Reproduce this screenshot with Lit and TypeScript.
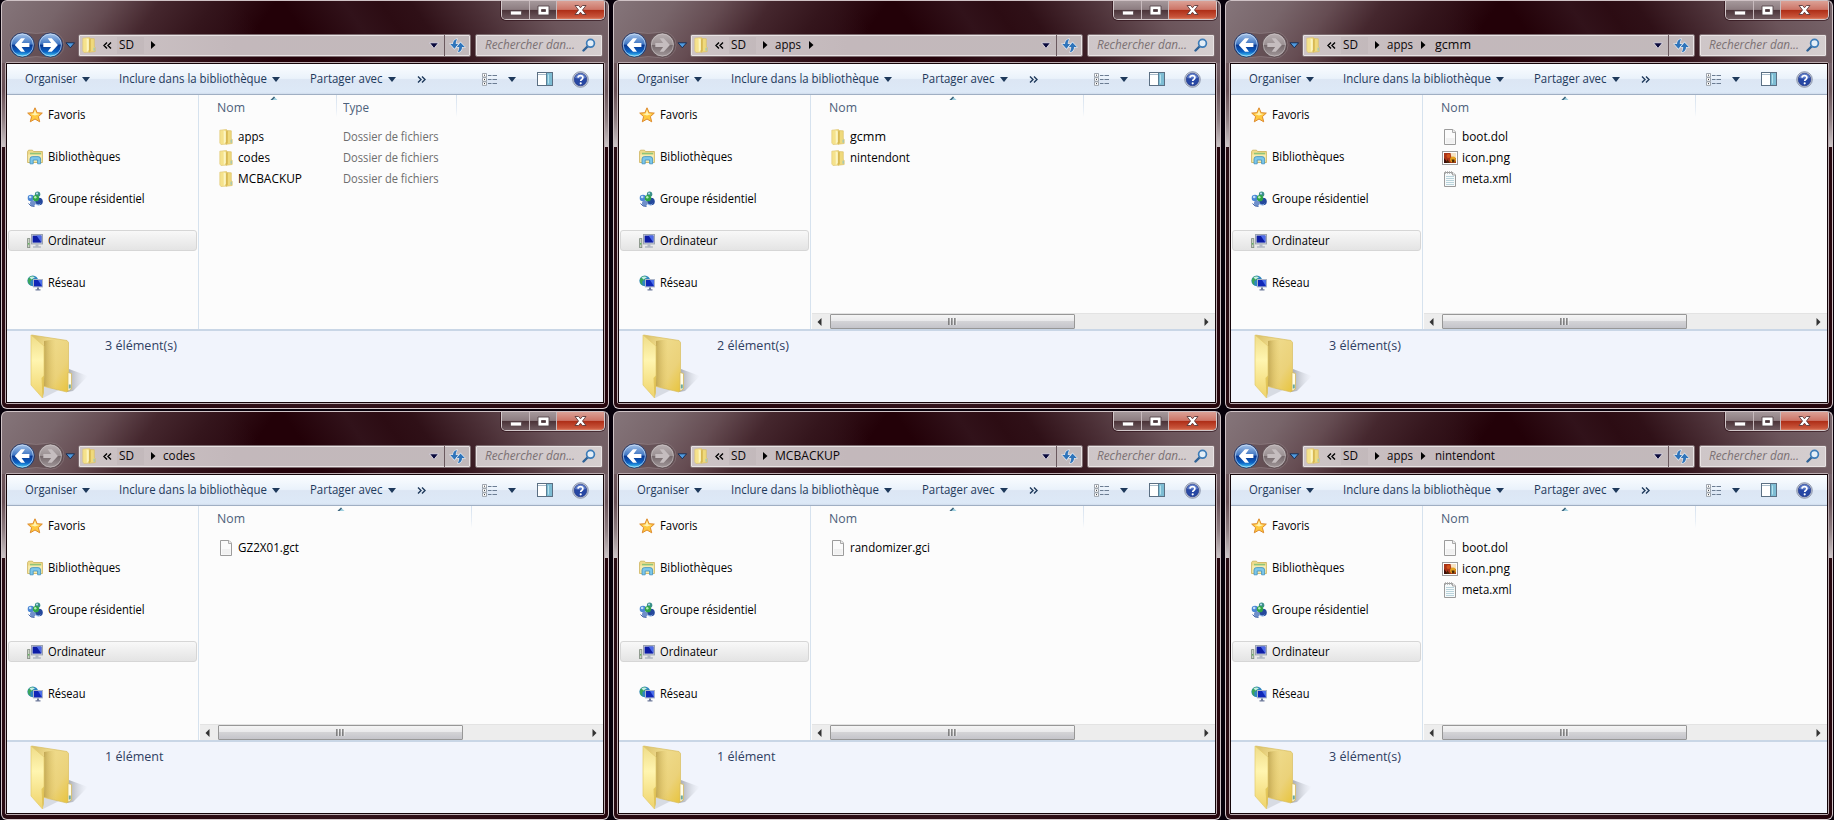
import { LitElement, html, css, svg, nothing } from "lit";
import { customElement, property } from "lit/decorators.js";

type FileKind = "folder" | "blank" | "image" | "text";
interface FileEntry { name: string; width: number; kind: FileKind; type?: string }
interface Crumb { label: string; width: number }
interface WindowData {
  path: Crumb[];
  files: FileEntry[];
  count: string;
  countWidth: number;
  root?: boolean;
}

const APPS: Crumb = { label: "apps", width: 26 };
const HOMEBREW: FileEntry[] = [
  { name: "boot.dol", width: 46, kind: "blank" },
  { name: "icon.png", width: 48, kind: "image" },
  { name: "meta.xml", width: 49.5, kind: "text" },
];

const WINDOWS: WindowData[] = [
  {
    path: [], root: true, count: "3 élément(s)", countWidth: 72,
    files: [
      { name: "apps", width: 26, kind: "folder", type: "Dossier de fichiers" },
      { name: "codes", width: 32, kind: "folder", type: "Dossier de fichiers" },
      { name: "MCBACKUP", width: 64, kind: "folder", type: "Dossier de fichiers" },
    ],
  },
  {
    path: [APPS], count: "2 élément(s)", countWidth: 72,
    files: [
      { name: "gcmm", width: 36, kind: "folder" },
      { name: "nintendont", width: 60, kind: "folder" },
    ],
  },
  { path: [APPS, { label: "gcmm", width: 36 }], count: "3 élément(s)", countWidth: 72, files: HOMEBREW },
  {
    path: [{ label: "codes", width: 32 }], count: "1 élément", countWidth: 58.5,
    files: [{ name: "GZ2X01.gct", width: 61, kind: "blank" }],
  },
  {
    path: [{ label: "MCBACKUP", width: 65 }], count: "1 élément", countWidth: 58.5,
    files: [{ name: "randomizer.gci", width: 80, kind: "blank" }],
  },
  { path: [APPS, { label: "nintendont", width: 60 }], count: "3 élément(s)", countWidth: 72, files: HOMEBREW },
];

const folderIcon = html`<svg width="16" height="16" viewBox="0 0 16 16">
  <path d="M1.800 1.200 8.500.4 9 15 3 15.600 1.800 14z" fill="#f5e28c" stroke="#dfc56e" stroke-width=".6"/>
  <path d="M8 1.400 13.300 1.800v7.700l.9.800v4.200l-6.200.8z" fill="#efd97c" stroke="#d8bc5e" stroke-width=".6"/>
  <path d="M5.600 1.600 8.200 2.600v9.900l-2.400 2.800z" fill="#fcf5c0"/>
  <path d="M7.900 2.600 9.800 1.800v12.200l-1.900.9z" fill="#cfae44" opacity=".75"/>
  <rect x="12.600" y="10.600" width="1.100" height="3.200" fill="#8fc4c8"/>
</svg>`;

const blankIcon = html`<svg width="16" height="16" viewBox="0 0 16 16">
  <path d="M2.500.5h8.500l2.500 2.500v12.500h-11z" fill="#fbfbfb" stroke="#9c9c9c"/>
  <path d="M10.500.5v3h3" fill="#ececec" stroke="#aaa"/>
  <path d="M4 9h8.500v5.500H4z" fill="#f1f1f1"/>
</svg>`;

const imageIcon = html`<svg width="16" height="16" viewBox="0 0 16 16">
  <rect x=".5" y="1.500" width="15" height="13" fill="#fff" stroke="#9c9c9c"/>
  <rect x="2" y="3" width="12" height="10" fill="#a93417"/>
  <path d="M8.500 3H14v5H9.500z" fill="#f6e3c4"/>
  <path d="M2 8l4 5H2z" fill="#3c100a"/>
  <circle cx="6.500" cy="6" r="2" fill="#d3541d"/>
  <circle cx="11" cy="9.500" r="2.900" fill="#e2a11f"/>
  <path d="M9.500 9.500h3v2.500l-2 1zM5 9l3 4H5z" fill="#4a2708"/>
</svg>`;

const textIcon = html`<svg width="16" height="16" viewBox="0 0 16 16">
  <path d="M2.500 1.500h8.500l2.500 2.500v11.500h-11z" fill="#f6fafb" stroke="#9a9a9a"/>
  <path d="M4 5.500h8M4 7.500h8M4 9.500h8M4 11.500h8M4 13.500h8" stroke="#b9d3db"/>
  <path d="M3.500 0v3M5.500 0v3M7.500 0v3M9.500 0v3" stroke="#a9a9a9" stroke-width=".8"/>
  <path d="M10.500 1v3h3" fill="#e9e9e9" stroke="#a5a5a5"/>
</svg>`;

const fileIcons = { folder: folderIcon, blank: blankIcon, image: imageIcon, text: textIcon };

const starIcon = html`<svg width="16" height="16" viewBox="0 0 16 16">
  <path d="M8 .8 10.100 5.700 15.300 6.100 11.400 9.600 12.700 14.800 8 12 3.300 14.800 4.600 9.600.7 6.100 5.900 5.700z" fill="#ffc93f" stroke="#dd8a2c" stroke-linejoin="round"/>
  <path d="M8 2.800 9.300 6.600 12.600 7 8 8.600 3.400 7 6.700 6.600z" fill="#fff3b4"/>
</svg>`;

const libraryIcon = html`<svg width="16" height="16" viewBox="0 0 16 16">
  <path d="M.6 2.500 1.500 1.200h4l1 1.300h8.900v11H.6z" fill="#efdc8c" stroke="#c9ae55" stroke-width=".8"/>
  <path d="M3 3.800h11v2H3z" fill="#8fc478"/><path d="M1.200 5.500h13.600v7.600H1.200z" fill="#f7ebae"/>
  <path d="M3 14.800V10Q3 7.600 5.500 7.600h5.500Q13.600 7.600 13.600 10v4.800h-3V11H6.200v3.800z" fill="#7cc6ea" stroke="#3f8fbd" stroke-width=".8"/>
</svg>`;

const groupIcon = html`<svg width="16" height="16" viewBox="0 0 16 16">
  <circle cx="10.600" cy="3.200" r="2.700" fill="#3b8f8a"/><circle cx="4" cy="7" r="3.300" fill="#4a86d4"/>
  <circle cx="12" cy="10.500" r="3.800" fill="#24489c"/><circle cx="5.800" cy="12.200" r="2.800" fill="#6f8fcb"/>
  <circle cx="9" cy="7.200" r="3.100" fill="#2fa545"/>
  <circle cx="10" cy="2.400" r="1" fill="#bfe3f3"/><circle cx="3.200" cy="6" r="1.300" fill="#c2e0fa"/>
  <circle cx="8.300" cy="6.200" r="1.200" fill="#b9ecb6"/><path d="M9 12.500q3 2 5-.5-1 3.500-5 2z" fill="#9cc0ef"/>
  <path d="M1.500 12.500q2 3.400 6 3" stroke="#4767a8" fill="none"/>
</svg>`;

const computerIcon = html`<svg width="16" height="16" viewBox="0 0 16 16">
  <rect x=".6" y="5.600" width="2.200" height="9" fill="#c9d2c4" stroke="#7e8a7e" stroke-width=".8"/>
  <rect x="1.200" y="10" width="1" height="1.600" fill="#4bb04a"/>
  <rect x="4.500" y="1.500" width="11" height="9.400" fill="#d5dae2" stroke="#9aa2b0"/>
  <rect x="5.600" y="2.600" width="8.800" height="7" fill="#0d1ca6"/><path d="M9.500 2.600h4.900v7z" fill="#4c6ae8"/>
  <path d="M8.500 11.300h3v2h2.400v1.500H6v-1.500h2.500z" fill="#b3b9c4"/>
</svg>`;

const networkIcon = html`<svg width="16" height="16" viewBox="0 0 16 16">
  <circle cx="5.800" cy="5.800" r="5.400" fill="#2f86c0"/>
  <path d="M1 4Q3.500 0 7 1.500 6.500 5 3.500 6 2.500 8.500 4 10.500 0 8.500 1 4z" fill="#3aa65c"/>
  <path d="M2.500 2.500Q5 .8 8 2.300L4.500 4.600z" fill="#c8eee6"/>
  <rect x="6.500" y="4.500" width="9" height="7.400" fill="#1027b8" stroke="#aab4c8"/>
  <path d="M11 5h4v6.200z" fill="#4c70ea"/>
  <path d="M10 12.400h2v1.800h1.500v1.400h-5v-1.400H10z" fill="#6f7b9b"/>
</svg>`;

const NAV_ITEMS = [
  { label: "Favoris", width: 37.5, icon: starIcon },
  { label: "Bibliothèques", width: 72.5, icon: libraryIcon },
  { label: "Groupe résidentiel", width: 96.5, icon: groupIcon },
  { label: "Ordinateur", width: 57.5, icon: computerIcon, selected: true },
  { label: "Réseau", width: 37.5, icon: networkIcon },
];

const bigFolder = html`<svg width="60" height="66" viewBox="0 0 60 66">
  <defs>
    <linearGradient id="fb" x1="0" y1="0" x2="1" y2="1"><stop offset="0" stop-color="#d9bf68"/><stop offset=".3" stop-color="#efdb8c"/><stop offset=".7" stop-color="#ebd27a"/><stop offset="1" stop-color="#e8c43c"/></linearGradient>
    <linearGradient id="ff" x1="0" y1="0" x2="0" y2="1"><stop offset="0" stop-color="#efdc88"/><stop offset=".4" stop-color="#fff5b0"/><stop offset="1" stop-color="#efd36a"/></linearGradient>
    <linearGradient id="fs" x1="0" y1="0" x2="1" y2="0"><stop offset="0" stop-color="#85888f" stop-opacity=".75"/><stop offset="1" stop-color="#c9cdd6" stop-opacity="0"/></linearGradient>
    <linearGradient id="fd" x1="0" y1="0" x2="1" y2="0"><stop offset="0" stop-color="#a0812c" stop-opacity=".9"/><stop offset="1" stop-color="#d8b94e" stop-opacity="0"/></linearGradient>
  </defs>
  <path d="M40 36 59 43 44 58 38 59z" fill="url(#fs)"/>
  <path d="M14 54 32 56 14 65z" fill="#c7cad2" opacity=".6"/>
  <path d="M2.500 2 38 7.500 39.500 9.500V57L38 59 13 53z" fill="url(#fb)" stroke="#d9bd5e" stroke-width=".7"/>
  <path d="M15 8 27 6V56L15 53z" fill="url(#fd)" opacity=".6"/>
  <path d="M39 39.500 42.500 40.500V56L39 58z" fill="#fffde9" stroke="#d5ba5f" stroke-width=".8"/>
  <rect x="39.800" y="51.500" width="2" height="4" fill="#6fa9a0"/>
  <path d="M2 2 15 13V43L13.500 65 2 52z" fill="url(#ff)" stroke="#e3ca6c" stroke-width=".7"/>
  <path d="M12.500 45 15 42.500V60L13.500 64.500z" fill="#dcbc4a" opacity=".7"/>
</svg>`;

const downArrow = html`<svg width="8" height="5" viewBox="0 0 8 5"><path d="M0 0h8L4 5z" fill="#1e395b"/></svg>`;

/** A single line of text, condensed horizontally to a given advance width. */
@customElement("fit-text")
export class FitText extends LitElement {
  static styles = css`
    :host { display: block; flex: none; white-space: nowrap; line-height: 16px; }
    span { display: inline-block; transform-origin: 0 50%; }
  `;
  @property() text = "";
  @property({ type: Number }) width = 0;

  render() { return html`<span>${this.text}</span>`; }

  updated() {
    const span = this.renderRoot.querySelector("span")!;
    span.style.transform = "none";
    const natural = span.getBoundingClientRect().width;
    this.style.width = `${this.width}px`;
    span.style.transform = `scaleX(${this.width / natural})`;
  }
}

@customElement("explorer-window")
export class ExplorerWindow extends LitElement {
  static styles = css`
    :host { display: block; }
    * { box-sizing: border-box; }
    svg { display: block; flex: none; }
    .window {
      width: 608px; height: 409px; padding: 0 3px 4px; overflow: hidden;
      display: flex; flex-direction: column;
      border: 1px solid #cfc2c5; border-radius: 6px; border-bottom-color: #d9cdd0;
      background:
        linear-gradient(to bottom, transparent 62px, #6e575c 62px, #684f55 90px, #8e7d81 118px, #cdc6c8 146px, transparent 146px) left / 5px 100% no-repeat,
        linear-gradient(to bottom, transparent 62px, #75626a 62px, #6a5359 90px, #8e7d81 118px, #cdc6c8 146px, transparent 146px) right / 5px 100% no-repeat,
        linear-gradient(125deg, #85757a 0, #78656a 50px, #654c52 90px, #45272e 130px, #34151c 175px, rgba(48,15,22,0) 225px) top / 100% 63px no-repeat,
        linear-gradient(55deg, #290810 0, #290810 200px, #230108 230px, #230108 265px, #31121a 315px, #2c0c13 345px, #2f1017 370px, #4b2f36 420px, #6b545a 475px, #78666c 534px) top / 100% 63px no-repeat,
        linear-gradient(100deg, #2b0f16, #26060d 30%, #33141c 60%, #25050c);
    }
    .caption { height: 27px; flex: none; display: flex; justify-content: flex-end; align-items: flex-start; }
    .buttons {
      display: flex; height: 19px; width: 104px; overflow: hidden;
      border: 1px solid #d2c8ca; border-top: 0; border-radius: 0 0 5px 5px;
      box-shadow: 0 0 0 1px rgba(40,10,18,.6);
    }
    .btn {
      display: flex; justify-content: center; align-items: center; width: 28px; padding-top: 1px;
      background: linear-gradient(#a5989b 0, #8d7d81 47%, #4a3237 50%, #6f5b60 100%);
      border-right: 1px solid #c7babd;
    }
    .btn.max { width: 27px; }
    .btn.close { flex: 1; border-right: 0; background: linear-gradient(#dba196 0, #cd7567 47%, #ad2c15 50%, #c9563c 90%, #dc8468 100%); padding-bottom: 1px; padding-top: 0; }
    .navbar { height: 34px; flex: none; display: flex; align-items: center; }
    .address, .search {
      height: 23px; display: flex; align-items: center; flex: none;
      border: 1px solid #7d6c70; box-shadow: inset 0 0 0 1px #e9e3e4;
      background: linear-gradient(to right, #cdc4c6, #c3b8bb 40%, #c2b9bb); border-radius: 2px;
    }
    .address { width: 393px; padding-left: 2px; color: #0b0709; }
    .mark { width: 22px; flex: none; }
    .chevrons { width: 14px; flex: none; }
    .sd { width: 27px; padding-left: 2px; height: 17px; background: rgba(90,70,76,.05); }
    .sep { width: 19px; padding-left: 7px; flex: none; }
    .sep.wide { width: 22px; padding-left: 8px; }
    .drop { margin-left: auto; margin-right: 5px; }
    .refresh { width: 26px; height: 21px; display: flex; align-items: center; justify-content: center; border-left: 1px solid #6a595e; }
    .search { width: 128px; margin-left: 4px; background: linear-gradient(to right, #cec6c8, #d5cecf); padding: 0 6px 0 9px; justify-content: space-between; font-style: italic; color: #7b7174; }
    .client {
      flex: 1; min-height: 0; display: flex; flex-direction: column;
      border: 1px solid #bcadb1; border-radius: 2px;
    }
    .inner { flex: 1; min-height: 0; border: 1px solid #140509; display: flex; flex-direction: column; background: #fcfcfc; }
    .toolbar {
      height: 31px; flex: none; display: flex; align-items: center; padding: 0 14px 0 18px; color: #1e395b;
      border-bottom: 1px solid #a0afc3;
      background: linear-gradient(#fbfdff 0, #eaf2fb 48%, #dce6f4 52%, #dde9f7 94%, #d0dcec 100%);
    }
    .menu { display: flex; align-items: center; gap: 5px; }
    .m1 { width: 94px; } .m2 { width: 191px; } .m3 { width: 107px; }
    .view { margin-left: auto; display: flex; align-items: center; gap: 11px; margin-right: 21px; }
    .pane { margin-right: 19px; }
    .main { flex: 1; min-height: 0; display: flex; }
    .sidebar { width: 192px; flex: none; border-right: 1px solid #d6e2ee; padding: 9px 1px 0; display: flex; flex-direction: column; gap: 21px; }
    .item { height: 21px; display: flex; align-items: center; gap: 5px; padding-left: 18px; border: 1px solid transparent; border-radius: 3px; color: #000; }
    .item.selected { border-color: #d6d6d6; background: linear-gradient(#f8f8f8, #e4e4e4); }
    .content { flex: 1; min-width: 0; display: flex; flex-direction: column; }
    .head { height: 31px; flex: none; display: flex; padding-left: 11px; color: #4c607a; }
    .col { position: relative; display: flex; height: 22px; align-items: flex-start; padding: 5px 0 0 7px; }
    .col::after { content: ""; position: absolute; right: 0; top: 0; width: 1px; height: 22px; background: linear-gradient(#d5e1ee, #e9eff6 70%, #fcfcfc); }
    .col.name { width: 262px; }
    .root .col.name { width: 127px; }
    .col.type { width: 120px; padding-left: 6px; }
    .sort { position: absolute; top: 1px; left: calc(50% - 4px); }
    .file { height: 21px; display: flex; align-items: center; padding-left: 19px; color: #000; }
    .file .name { width: 105px; margin-left: 4px; flex: none; }
    .file .kind { color: #6d6d6d; }
    .scroll { margin: auto 0 0 1px; height: 16px; display: flex; align-items: center; background: #ededed; border-top: 1px solid #e3e3e3; }
    .arrow { width: 18px; padding-left: 5px; flex: none; }
    .thumb {
      width: 245px; height: 15px; border: 1px solid #979797; border-radius: 1px; flex: none;
      display: flex; align-items: center; justify-content: center;
      background: linear-gradient(#f5f5f5 0, #e9e9eb 45%, #d3d3d6 50%, #c4c4ca 100%);
    }
    .arrow.right { margin-left: auto; width: 16px; }
    .details { height: 73px; flex: none; border-top: 2px solid #c9d6e6; background: #f1f4fc; display: flex; padding: 2px 0 0 22px; color: #2f4062; }
    .count { padding: 5px 0 0 16px; }
  `;

  @property({ attribute: false }) data!: WindowData;

  private text(text: string, width: number) {
    return html`<fit-text .text=${text} .width=${width}></fit-text>`;
  }

  private navButtons(forward: boolean) {
    return html`<svg width="73" height="34" viewBox="0 0 73 34">
      <defs>
        <linearGradient id="blue" x1="0" y1="0" x2="0" y2="1"><stop offset="0" stop-color="#a9c6ea"/><stop offset=".45" stop-color="#4278c4"/><stop offset=".52" stop-color="#0a3a94"/><stop offset=".78" stop-color="#0b62c4"/><stop offset="1" stop-color="#4fdcff"/></linearGradient>
        <linearGradient id="grey" x1="0" y1="0" x2="0" y2="1"><stop offset="0" stop-color="#b9b0b2"/><stop offset=".48" stop-color="#9b9193"/><stop offset=".52" stop-color="#766a6d"/><stop offset="1" stop-color="#a39a9c"/></linearGradient>
      </defs>
      <path d="M17 4Q31 7 46 4A13 13 0 0 1 46 30Q31 27 17 30A13 13 0 0 1 17 4z" fill="#5a4449" fill-opacity=".55" stroke="#958589" stroke-opacity=".55"/>
      <circle cx="17.300" cy="17" r="12" fill="url(#blue)" stroke="#1c2f60" stroke-width=".8"/>
      <circle cx="17.300" cy="17" r="11" fill="none" stroke="#d6e6f8" stroke-opacity=".65"/>
      <path d="M9.800 17 16 10.300h4L16.600 14.900h7.800v4.200h-7.800l3.400 4.600h-4z" fill="#fff"/>
      ${forward
        ? svg`<circle cx="45.400" cy="17" r="12" fill="url(#blue)" stroke="#1c2f60" stroke-width=".8"/><circle cx="45.400" cy="17" r="11" fill="none" stroke="#d6e6f8" stroke-opacity=".65"/>`
        : svg`<circle cx="45.400" cy="17" r="12" fill="url(#grey)" stroke="#55464a" stroke-width=".8"/><circle cx="45.400" cy="17" r="11" fill="none" stroke="#d0c8ca" stroke-opacity=".6"/>`}
      <path d="M52.900 17 46.700 10.300h-4l3.400 4.600h-7.800v4.200h7.800l-3.400 4.600h4z" fill=${forward ? "#fff" : "#c5bdbf"}/>
      <path d="M61 14.800h8.600l-4.300 5z" fill="#4f9be0" stroke="#14264a" stroke-width=".9"/>
    </svg>`;
  }

  private sep(wide: boolean) {
    return html`<div class="sep ${wide ? "wide" : ""}"><svg width="5" height="8" viewBox="0 0 5 8"><path d="M0 0 4.500 4 0 8z" fill="#000"/></svg></div>`;
  }

  render() {
    const { path, files, count, countWidth, root } = this.data;
    return html`<div class="window ${root ? "root" : ""}">
      <div class="caption"><div class="buttons">
        <div class="btn"><svg width="12" height="10" viewBox="0 0 12 10"><rect x=".5" y="5" width="11" height="4" fill="#fff" stroke="#5a4a4f" stroke-width=".8"/></svg></div>
        <div class="btn max"><svg width="13" height="11" viewBox="0 0 13 11"><path d="M1 1h11v9H1zM4.500 4.500h4v2h-4z" fill="#fff" fill-rule="evenodd" stroke="#55454a" stroke-width=".9"/></svg></div>
        <div class="btn close"><svg width="13" height="12" viewBox="0 0 13 12"><path d="M1 1.500h3.600l1.900 2.300 1.900-2.300H12L8.500 6l3.500 4.500H8.400L6.500 8.200l-1.900 2.300H1L4.500 6z" fill="#fff" stroke="#5c3a3a" stroke-width=".9"/></svg></div>
      </div></div>
      <div class="navbar">
        ${this.navButtons(!!root)}
        <div class="address">
          <div class="mark">${folderIcon}</div>
          <div class="chevrons"><svg width="9" height="7" viewBox="0 0 9 7"><path d="M4 .5 1 3.500l3 3M8 .5 5 3.500l3 3" fill="none" stroke="#000" stroke-width="1.400"/></svg></div>
          <div class="sd">${this.text("SD", 15)}</div>
          ${this.sep(false)}
          ${path.map(c => html`${this.text(c.label, c.width)}${c.label === "apps" ? this.sep(true) : nothing}`)}
          <svg class="drop" width="10" height="7" viewBox="0 0 10 7"><path d="M.5.800h9L5 6.400z" fill="#0a0a3c" stroke="#efeaf2" stroke-width=".8"/></svg>
          <div class="refresh"><svg width="17" height="15" viewBox="0 0 17 15">
            <path d="M7 1.200Q4 2.500 4 6H1.200l4.300 4.800L9.200 6H6.800Q6.600 3.800 8 1.200z" fill="#2f74ba" stroke="#e4eef8" stroke-width="1.200" paint-order="stroke"/>
            <path d="M10 14q3-1.300 3-5h2.800L11.500 4.400 7.800 9h2.400q.2 2.400-1.200 5z" fill="#2f74ba" stroke="#e4eef8" stroke-width="1.200" paint-order="stroke"/>
          </svg></div>
        </div>
        <div class="search">
          ${this.text("Rechercher dan...", 90)}
          <svg width="14" height="14" viewBox="0 0 14 14"><path d="M1.500 12.500 6 8" stroke="#2f6296" stroke-width="2.400" stroke-linecap="round"/><circle cx="8.500" cy="5.300" r="3.900" fill="#e4eef7" stroke="#3d7cb8" stroke-width="1.700"/></svg>
        </div>
      </div>
      <div class="client"><div class="inner">
        <div class="toolbar">
          <div class="menu m1">${this.text("Organiser", 52)}${downArrow}</div>
          <div class="menu m2">${this.text("Inclure dans la bibliothèque", 148)}${downArrow}</div>
          <div class="menu m3">${this.text("Partager avec", 72.5)}${downArrow}</div>
          <svg width="9" height="7" viewBox="0 0 9 7"><path d="M1 .5l3 3-3 3M5 .5l3 3-3 3" fill="none" stroke="#1e395b" stroke-width="1.400"/></svg>
          <div class="view">
            <svg width="15" height="13" viewBox="0 0 15 13">
              <path d="M.5.500h4v3.500h-4zM.5 4.700h4v3.500h-4zM.5 8.900h4v3.500h-4z" fill="#fff" stroke="#8a929c" stroke-width=".8"/>
              <path d="M2 2.200h1M2 6.400h1M2 10.600h1" stroke="#333"/>
              <path d="M6 2.500h3.500m1 0H15M6 6.500h3.500m1 0H15M6 10.500h3.500m1 0H15" stroke="#6b7c92"/>
            </svg>${downArrow}
          </div>
          <svg class="pane" width="16" height="14" viewBox="0 0 16 14"><rect x=".5" y=".5" width="15" height="13" fill="#fff" stroke="#5b6f83"/><path d="M1 2.500h14" stroke="#a9bccb"/><path d="M10 1h5v12h-5z" fill="#7dbcd3"/><path d="M9.500 1v12" stroke="#5b7f95"/><path d="M11.500 2.500v9" stroke="#b8e2ee"/></svg>
          <svg width="17" height="17" viewBox="0 0 17 17"><circle cx="8.500" cy="8.500" r="7.800" fill="#c9cfdd" stroke="#79839b" stroke-width=".8"/><circle cx="8.500" cy="8.500" r="6.300" fill="#2747a4" stroke="#1b2f7c" stroke-width=".6"/><path d="M3 7Q8 8 14 7 13 2.500 8.500 2.500T3 7z" fill="#7491d8" opacity=".7"/><path d="M6 6.600Q6.200 4.600 8.500 4.600t2.400 1.900q0 1.200-1.200 1.900-1 .6-1 1.700" fill="none" stroke="#fff" stroke-width="1.700"/><circle cx="8.700" cy="12.300" r="1.100" fill="#fff"/></svg>
        </div>
        <div class="main">
          <div class="sidebar">
            ${NAV_ITEMS.map(n => html`<div class="item ${n.selected ? "selected" : ""}">${n.icon}${this.text(n.label, n.width)}</div>`)}
          </div>
          <div class="content">
            <div class="head">
              <div class="col name">${this.text("Nom", 28)}<svg class="sort" width="8" height="4" viewBox="0 0 8 4"><path d="M.5 4 4 .4 7.500 4z" fill="#9fd0e0"/><path d="M.5 4 4 .4 5 1.400 2.500 4z" fill="#3c6078"/></svg></div>
              ${root ? html`<div class="col type">${this.text("Type", 26)}</div>` : nothing}
            </div>
            ${files.map(f => html`<div class="file">${fileIcons[f.kind]}<div class="name">${this.text(f.name, f.width)}</div>${f.type ? html`<div class="kind">${this.text(f.type, 95.5)}</div>` : nothing}</div>`)}
            ${root ? nothing : html`<div class="scroll">
              <div class="arrow"><svg width="5" height="8" viewBox="0 0 5 8"><path d="M4.500 0v8L.5 4z" fill="#333"/></svg></div>
              <div class="thumb"><svg width="9" height="7" viewBox="0 0 9 7"><path d="M1 0v7M4 0v7M7 0v7" stroke="#555" stroke-width="1.300"/><path d="M2.100 0v7M5.100 0v7M8.100 0v7" stroke="#fff" stroke-width=".7"/></svg></div>
              <div class="arrow right"><svg width="5" height="8" viewBox="0 0 5 8"><path d="M.5 0v8l4-4z" fill="#333"/></svg></div>
            </div>`}
          </div>
        </div>
        <div class="details">${bigFolder}<div class="count">${this.text(count, countWidth)}</div></div>
      </div></div>
    </div>`;
  }
}

@customElement("app-root")
export class AppRoot extends LitElement {
  static styles = css`
    :host {
      display: grid; grid-template-columns: repeat(3, 608px); grid-template-rows: repeat(2, 409px);
      gap: 2px 4px; padding-left: 1px; width: 1834px; height: 820px; box-sizing: border-box; overflow: hidden;
      background: #07000a; font-family: "Open Sans", "Noto Sans", sans-serif; font-size: 12px;
    }
  `;
  render() {
    return WINDOWS.map(w => html`<explorer-window .data=${w}></explorer-window>`);
  }
}
